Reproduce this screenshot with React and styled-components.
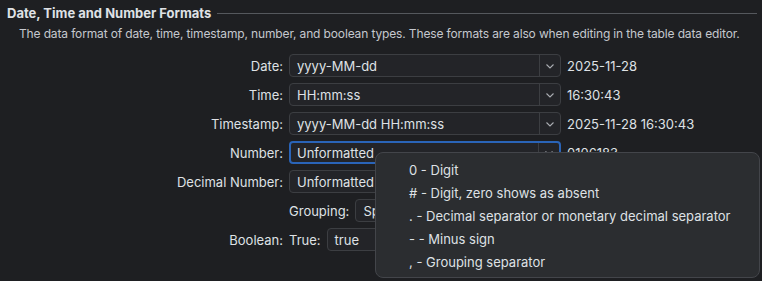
import styled, { createGlobalStyle } from "styled-components";

const GlobalStyle = createGlobalStyle`
  html, body {
    margin: 0;
    padding: 0;
    background: #1e1f22;
  }
  body {
    font-family: Inter, "Noto Sans", sans-serif;
    font-size: 13px;
    color: #dfe1e5;
  }
`;

const Page = styled.div`
  position: relative;
  width: 762px;
  height: 281px;
  overflow: hidden;
  background: #1e1f22;
`;

const TitleRow = styled.div`
  display: flex;
  align-items: center;
  gap: 6px;
  padding: 4px 5px 0 7px;
  height: 18px;
`;

const Title = styled.div`
  font-weight: 700;
  color: #dfe1e5;
  white-space: nowrap;
`;

const TitleLine = styled.div`
  flex: 1;
  height: 1px;
  background: #55585d;
`;

const Description = styled.div`
  padding: 3px 0 0 19px;
  height: 18px;
  line-height: 18px;
  font-size: 12px;
  letter-spacing: -0.14px;
  color: #c5c8ce;
  white-space: nowrap;
`;

const Form = styled.div`
  display: grid;
  grid-template-columns: 283px 272px auto;
  column-gap: 6px;
  row-gap: 6px;
  margin-top: 11px;
  align-items: center;
`;

const Label = styled.div`
  text-align: right;
  white-space: nowrap;
`;

const Value = styled.div`
  white-space: nowrap;
  color: #dfe1e5;
`;

const Inline = styled.div`
  grid-column: 2 / span 2;
  display: flex;
  align-items: center;
  gap: 6px;
`;

const ComboBox = styled.div`
  box-sizing: border-box;
  display: flex;
  align-items: stretch;
  height: 23px;
  width: ${({ width }) => width || "272px"};
  border: ${({ focused }) => (focused ? "2px solid #2a64b8" : "1px solid #3c3e42")};
  border-radius: 4px;
  background: #232428;
  overflow: hidden;
`;

const ComboText = styled.div`
  flex: 1;
  display: flex;
  align-items: center;
  padding-left: ${({ focused }) => (focused ? "6px" : "7px")};
  white-space: nowrap;
  color: #dfe1e5;
`;

const ArrowBox = styled.div`
  width: 20px;
  display: flex;
  align-items: center;
  justify-content: center;
  border-left: 1px solid #3c3e42;
  color: #a8abb0;
`;

const Popup = styled.div`
  position: absolute;
  left: 375px;
  top: 152px;
  box-sizing: border-box;
  width: 385px;
  height: 126px;
  padding: 6px 0 0 33px;
  background: #2b2d30;
  border: 1px solid #43454a;
  border-radius: 8px;
`;

const PopupItem = styled.div`
  height: 23px;
  line-height: 23px;
  white-space: nowrap;
  color: #dfe1e5;
`;

const Chevron = () => (
  <svg width="10" height="10" viewBox="0 0 10 10">
    <path d="M1.5 3.5 L5 7 L8.5 3.5" fill="none" stroke="currentColor" strokeWidth="1.1" />
  </svg>
);

const Combo = ({ text, focused, width, arrow = true }) => (
  <ComboBox focused={focused} width={width}>
    <ComboText focused={focused}>{text}</ComboText>
    {arrow && (
      <ArrowBox>
        <Chevron />
      </ArrowBox>
    )}
  </ComboBox>
);

const hints = [
  "0 - Digit",
  "# - Digit, zero shows as absent",
  ". - Decimal separator or monetary decimal separator",
  "- - Minus sign",
  ", - Grouping separator",
];

export default function App() {
  return (
    <Page>
      <GlobalStyle />
      <TitleRow>
        <Title>Date, Time and Number Formats</Title>
        <TitleLine />
      </TitleRow>
      <Description>
        The data format of date, time, timestamp, number, and boolean types. These formats are also when editing in the table data editor.
      </Description>
      <Form>
        <Label>Date:</Label>
        <Combo text="yyyy-MM-dd" />
        <Value>2025-11-28</Value>

        <Label>Time:</Label>
        <Combo text="HH:mm:ss" />
        <Value>16:30:43</Value>

        <Label>Timestamp:</Label>
        <Combo text="yyyy-MM-dd HH:mm:ss" />
        <Value>2025-11-28 16:30:43</Value>

        <Label>Number:</Label>
        <Combo text="Unformatted" focused />
        <Value>0106183</Value>

        <Label>Decimal Number:</Label>
        <Combo text="Unformatted" />
        <div />

        <div />
        <Inline>
          <span>Grouping:</span>
          <Combo text="Space" width="100px" />
        </Inline>

        <Label>Boolean:</Label>
        <Inline>
          <span>True:</span>
          <Combo text="true" width="90px" arrow={false} />
        </Inline>
      </Form>
      <Popup>
        {hints.map((h) => (
          <PopupItem key={h}>{h}</PopupItem>
        ))}
      </Popup>
    </Page>
  );
}
